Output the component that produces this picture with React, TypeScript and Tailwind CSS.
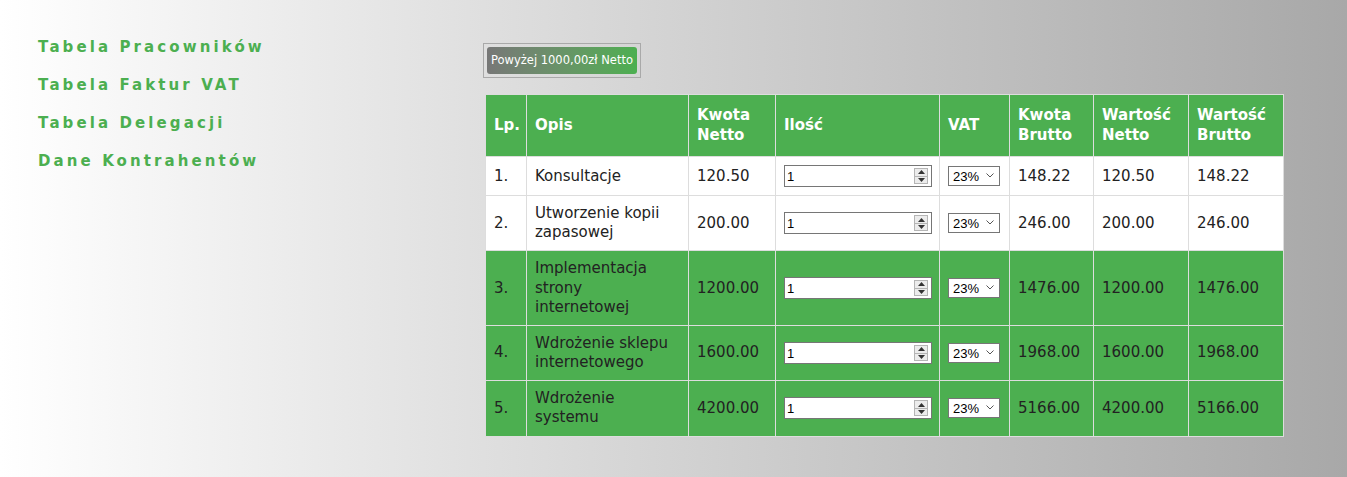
import * as React from 'react';

type Row = {
  lp: string;
  opis: string;
  netto: string;
  brutto: string;
  highlight: boolean;
};

const rows: Row[] = [
  { lp: '1.', opis: 'Konsultacje', netto: '120.50', brutto: '148.22', highlight: false },
  { lp: '2.', opis: 'Utworzenie kopii zapasowej', netto: '200.00', brutto: '246.00', highlight: false },
  { lp: '3.', opis: 'Implementacja strony internetowej', netto: '1200.00', brutto: '1476.00', highlight: true },
  { lp: '4.', opis: 'Wdrożenie sklepu internetowego', netto: '1600.00', brutto: '1968.00', highlight: true },
  { lp: '5.', opis: 'Wdrożenie systemu', netto: '4200.00', brutto: '5166.00', highlight: true },
];

const navLinks = ['Tabela Pracowników', 'Tabela Faktur VAT', 'Tabela Delegacji', 'Dane Kontrahentów'];

function QtyInput() {
  return (
    <div className="flex h-[22px] w-[148px] items-center border border-[#767676] bg-white pr-[3px]">
      <input
        type="text"
        defaultValue="1"
        className="h-full w-full min-w-0 bg-transparent pl-[2px] text-[13px] text-black outline-none"
        style={{ fontFamily: '"Liberation Sans", Arial, sans-serif' }}
      />
      {/* spinner */}
      <div className="flex h-[16px] w-[14px] shrink-0 flex-col border border-[#b5b5b5] bg-[#ececec]">
        <div className="flex flex-1 items-center justify-center border-b border-[#b5b5b5]">
          <svg width="7" height="4" viewBox="0 0 7 4">
            <path d="M3.5 0 L7 4 L0 4 Z" fill="#333" />
          </svg>
        </div>
        <div className="flex flex-1 items-center justify-center">
          <svg width="7" height="4" viewBox="0 0 7 4">
            <path d="M0 0 L7 0 L3.5 4 Z" fill="#333" />
          </svg>
        </div>
      </div>
    </div>
  );
}

function VatSelect() {
  return (
    <div className="relative h-[20px] w-[52px]">
      <select
        defaultValue="23"
        className="h-full w-full appearance-none border border-[#767676] bg-white pl-[4px] text-[13px] text-black outline-none"
        style={{ fontFamily: '"Liberation Sans", Arial, sans-serif' }}
      >
        <option value="23">23%</option>
        <option value="8">8%</option>
        <option value="5">5%</option>
        <option value="0">0%</option>
      </select>
      <svg
        className="pointer-events-none absolute right-[6px] top-[7px]"
        width="8"
        height="5"
        viewBox="0 0 8 5"
      >
        <path d="M0.5 0.5 L4 4 L7.5 0.5" fill="none" stroke="#555" strokeWidth="1" />
      </svg>
    </div>
  );
}

export default function App() {
  const th = 'border border-[#dddddd] px-2 py-2 text-left align-middle font-bold text-white';
  const td = 'border border-[#dddddd] px-2 py-2 align-middle';

  return (
    <div
      className="flex min-h-[477px] w-full bg-gradient-to-r from-white to-[#a8a8a8]"
      style={{ fontFamily: '"DejaVu Sans", "Open Sans", sans-serif' }}
    >
      {/* Sidebar navigation */}
      <nav className="flex w-[483px] shrink-0 flex-col gap-[18px] pl-[38px] pt-[37px]">
        {navLinks.map((link) => (
          <a
            key={link}
            href="#"
            className="text-[15px] font-bold leading-[20px] tracking-[3.1px] text-[#4caf50]"
          >
            {link}
          </a>
        ))}
      </nav>

      {/* Main content */}
      <main className="flex flex-col pt-[43px]">
        <div className="w-fit border border-[#a9a9a9] p-[3px]">
          <button
            type="button"
            className="h-[27px] rounded-[3px] bg-gradient-to-r from-[#777777] to-[#4caf50] px-[4px] text-[11.5px] text-white"
            style={{ fontFamily: '"DejaVu Sans", Tahoma, sans-serif' }}
          >
            Powyżej 1000,00zł Netto
          </button>
        </div>

        <table className="ml-[2px] mt-[16px] w-[798px] table-fixed border-collapse text-[15px] leading-[19.15px] text-[#222222]">
          <colgroup>
            <col className="w-[41px]" />
            <col className="w-[162px]" />
            <col className="w-[87px]" />
            <col className="w-[164px]" />
            <col className="w-[70px]" />
            <col className="w-[84px]" />
            <col className="w-[95px]" />
            <col className="w-[95px]" />
          </colgroup>
          <thead>
            <tr className="h-[62px] bg-[#4caf50]">
              <th className={th}>Lp.</th>
              <th className={th}>Opis</th>
              <th className={th}>Kwota Netto</th>
              <th className={th}>Ilość</th>
              <th className={th}>VAT</th>
              <th className={th}>Kwota Brutto</th>
              <th className={th}>Wartość Netto</th>
              <th className={th}>Wartość Brutto</th>
            </tr>
          </thead>
          <tbody>
            {rows.map((row) => (
              <tr key={row.lp} className={row.highlight ? 'bg-[#4caf50]' : 'bg-white'}>
                <td className={td}>{row.lp}</td>
                <td className={td}>{row.opis}</td>
                <td className={td}>{row.netto}</td>
                <td className={td}>
                  <QtyInput />
                </td>
                <td className={td}>
                  <VatSelect />
                </td>
                <td className={td}>{row.brutto}</td>
                <td className={td}>{row.netto}</td>
                <td className={td}>{row.brutto}</td>
              </tr>
            ))}
          </tbody>
        </table>
      </main>
    </div>
  );
}
